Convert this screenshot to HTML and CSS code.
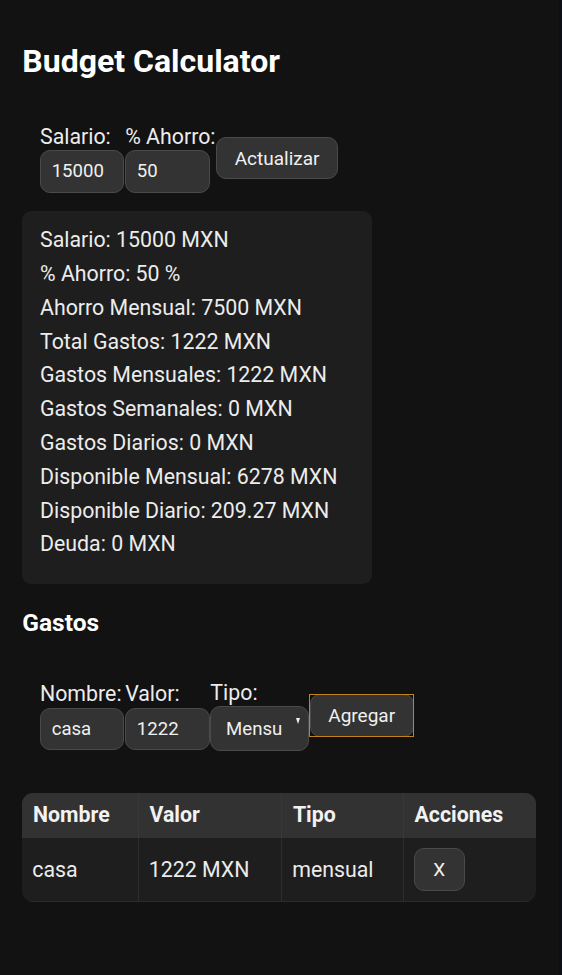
FILE: index.html
```html
<!DOCTYPE html>
<html lang="es">
<head>
<meta charset="utf-8">
<title>Budget Calculator</title>
<link rel="stylesheet" href="styles.css">
</head>
<body>
<div class="app">
  <h1 class="title">Budget Calculator</h1>

  <form class="row-form form-top">
    <label class="field"><span class="field-label">Salario:</span><input class="control" type="text" value="15000"></label>
    <label class="field"><span class="field-label">% Ahorro:</span><input class="control" type="text" value="50"></label>
    <button class="btn" type="button">Actualizar</button>
  </form>

  <div class="summary">
    <p>Salario: 15000 MXN</p>
    <p>% Ahorro: 50 %</p>
    <p>Ahorro Mensual: 7500 MXN</p>
    <p>Total Gastos: 1222 MXN</p>
    <p>Gastos Mensuales: 1222 MXN</p>
    <p>Gastos Semanales: 0 MXN</p>
    <p>Gastos Diarios: 0 MXN</p>
    <p>Disponible Mensual: 6278 MXN</p>
    <p>Disponible Diario: 209.27 MXN</p>
    <p>Deuda: 0 MXN</p>
  </div>

  <h2 class="section-title">Gastos</h2>

  <form class="row-form form-gastos">
    <label class="field"><span class="field-label">Nombre:</span><input class="control" type="text" value="casa"></label>
    <label class="field"><span class="field-label">Valor:</span><input class="control" type="text" value="1222"></label>
    <label class="field"><span class="field-label">Tipo:</span>
      <span class="select-wrap">
        <select class="select">
          <option>Mensual</option>
          <option>Semanal</option>
          <option>Diario</option>
        </select>
      </span>
    </label>
    <button class="btn btn-focused" type="button">Agregar</button>
  </form>

  <div class="table-wrap">
    <table class="table">
      <colgroup>
        <col class="col-1">
        <col class="col-2">
        <col class="col-3">
        <col class="col-4">
      </colgroup>
      <thead>
        <tr><th>Nombre</th><th>Valor</th><th>Tipo</th><th>Acciones</th></tr>
      </thead>
      <tbody>
        <tr><td>casa</td><td>1222 MXN</td><td>mensual</td><td><button class="btn btn-small" type="button">X</button></td></tr>
      </tbody>
    </table>
  </div>
</div>
</body>
</html>
```

FILE: styles.css
```css
html {
  background: #0c0f15;
}
body {
  margin: 0;
  font-family: Roboto, "Noto Sans", "Liberation Sans", sans-serif;
  color: #ececec;
}
.app {
  box-sizing: border-box;
  width: 559px;
  min-height: 975px;
  background: #121212;
  padding: 43px 22.3px 0;
}
.title {
  margin: 0 0 43px;
  font-size: 32px;
  font-weight: 700;
  line-height: 37.5px;
  color: #ffffff;
}
.row-form {
  display: flex;
  align-items: center;
  gap: 0.7px;
  padding-left: 17.7px;
  margin: 0;
}
.field {
  display: flex;
  flex-direction: column;
  align-items: flex-start;
}
.field-label {
  font-size: 21.33px;
  line-height: 25px;
  margin-bottom: 1.5px;
  white-space: nowrap;
  color: #ececec;
}
.control {
  box-sizing: border-box;
  width: 84.5px;
  height: 42.7px;
  margin: 0;
  padding: 0 10.7px;
  font-family: inherit;
  font-size: 18.6px;
  color: #f0f0f0;
  background: #333333;
  border: 1px solid #4a4a4a;
  border-radius: 10px;
  outline: none;
}
.select-wrap {
  position: relative;
  display: block;
}
.select-wrap::after {
  content: "";
  position: absolute;
  right: 8.7px;
  top: 11.5px;
  width: 0;
  height: 0;
  border-left: 2.6px solid transparent;
  border-right: 2.6px solid transparent;
  border-top: 6px solid #eeeeee;
  pointer-events: none;
}
.select {
  box-sizing: border-box;
  display: block;
  width: 98.7px;
  height: 45px;
  margin: 0;
  padding: 0 26px 0 14.7px;
  font-family: inherit;
  font-size: 18.6px;
  color: #f0f0f0;
  background: #333333;
  border: 1px solid #4a4a4a;
  border-radius: 10px;
  -webkit-appearance: none;
  appearance: none;
  outline: none;
}
.btn {
  box-sizing: border-box;
  height: 42.7px;
  margin: 0;
  padding: 0 17.5px;
  font-family: inherit;
  font-size: 19px;
  color: #f0f0f0;
  background: #333333;
  border: 1px solid #4a4a4a;
  border-radius: 10px;
  cursor: pointer;
}
.btn-focused {
  position: relative;
}
.btn-focused::after {
  content: "";
  position: absolute;
  inset: -1.5px;
  border: 1.5px solid #c2841a;
  pointer-events: none;
}
.summary {
  box-sizing: border-box;
  width: 349.4px;
  margin-top: 18px;
  padding: 16.5px 17.7px 27.3px;
  background: #1e1e1e;
  border-radius: 9px;
  display: flex;
  flex-direction: column;
  gap: 8.8px;
}
.summary p {
  margin: 0;
  font-size: 21.33px;
  line-height: 25px;
  color: #ececec;
  white-space: nowrap;
}
.section-title {
  margin: 25px 0 42.5px;
  font-size: 24.5px;
  font-weight: 700;
  line-height: 28.7px;
  color: #ffffff;
}
.form-gastos {
  margin-bottom: 41.6px;
}
.table-wrap {
  width: 513.4px;
  border-radius: 11px;
  overflow: hidden;
  background: #1e1e1e;
}
.table {
  width: 100%;
  border-collapse: collapse;
  table-layout: fixed;
}
.col-1 { width: 116px; }
.col-2 { width: 143.4px; }
.col-3 { width: 121.6px; }
.col-4 { width: 132.4px; }
.table th {
  background: #323232;
  text-align: left;
  font-size: 21.33px;
  font-weight: 700;
  line-height: 25px;
  padding: 9px 10.7px 11px;
  color: #f2f2f2;
  border-right: 1px solid #383838;
}
.table td {
  font-size: 21.33px;
  line-height: 25px;
  padding: 10.3px 10px;
  vertical-align: middle;
  color: #ececec;
  border-right: 1px solid #2e2e2e;
  border-bottom: 1px solid #2b2b2b;
}
.table th:last-child,
.table td:last-child {
  border-right: none;
}
.btn-small {
  padding: 0 18.5px;
}
```
